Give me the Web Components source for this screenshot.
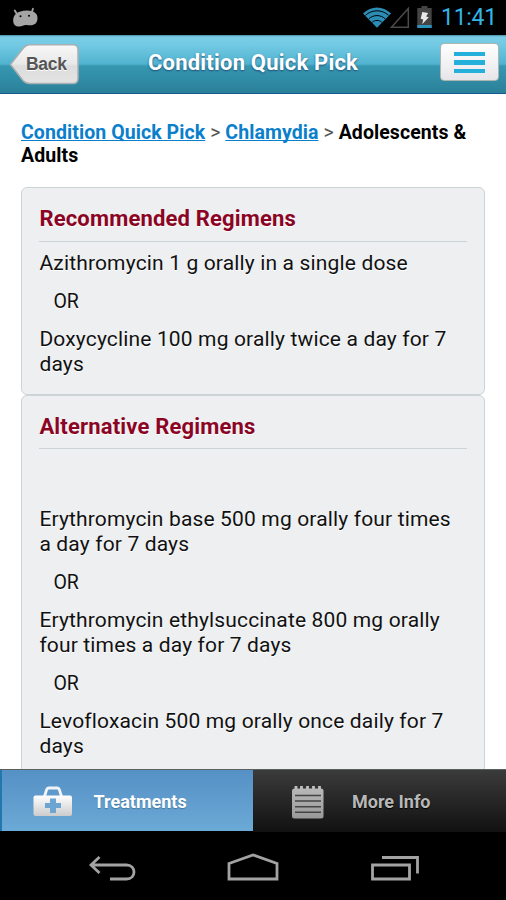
<!DOCTYPE html>
<html lang="en">
  <head>
    <meta charset="UTF-8" />
    <meta name="viewport" content="width=device-width, initial-scale=1.0" />
    <title>Condition Quick Pick</title>
    <style>
      body {
        margin: 0;
        background: #000;
        font-family: Roboto, "Liberation Sans", sans-serif;
      }
    </style>
  </head>
  <body>
    <phone-screen>
      <status-bar slot="top" time="11:41"></status-bar>
      <title-bar slot="top" back="Back">Condition Quick Pick</title-bar>

      <crumb-trail>
        <crumb-link>Condition Quick Pick</crumb-link>
        &gt;
        <crumb-link>Chlamydia</crumb-link>
        &gt;
        <b>Adolescents &amp;<br />Adults</b>
      </crumb-trail>

      <regimen-card heading="Recommended Regimens">
        <regimen-item>Azithromycin 1 g orally in a single dose</regimen-item>
        <regimen-item or>OR</regimen-item>
        <regimen-item>Doxycycline 100 mg orally twice a day for 7<br />days</regimen-item>
      </regimen-card>
      <regimen-card heading="Alternative Regimens" spaced>
        <regimen-item>Erythromycin base 500 mg orally four times<br />a day for 7 days</regimen-item>
        <regimen-item or>OR</regimen-item>
        <regimen-item>Erythromycin ethylsuccinate 800 mg orally<br />four times a day for 7 days</regimen-item>
        <regimen-item or>OR</regimen-item>
        <regimen-item>Levofloxacin 500 mg orally once daily for 7<br />days</regimen-item>
      </regimen-card>

      <tab-bar slot="bottom">
        <tab-item icon="kit" active>Treatments</tab-item>
        <tab-item icon="notes">More Info</tab-item>
      </tab-bar>
      <system-nav slot="bottom"></system-nav>
    </phone-screen>

    <script>
      // Small helper base: puts the static markup in an open shadow root
      class BaseElement extends HTMLElement {
        constructor() {
          super();
          this.attachShadow({ mode: "open" });
        }

        connectedCallback() {
          this.shadowRoot.innerHTML = this.render();
        }
      }

      class PhoneScreen extends BaseElement {
        render() {
          return `
            <style>
              :host {
                display: flex;
                flex-direction: column;
                width: 506px;
                height: 900px;
                overflow: hidden;
              }
              main {
                flex: 1;
                min-height: 0;
                overflow: hidden;
                box-sizing: border-box;
                padding: 28px 21px 0;
                background: #fff;
              }
            </style>
            <slot name="top"></slot>
            <main><slot></slot></main>
            <slot name="bottom"></slot>
          `;
        }
      }
      customElements.define("phone-screen", PhoneScreen);

      class StatusBar extends BaseElement {
        render() {
          return `
            <style>
              :host {
                display: flex;
                justify-content: space-between;
                height: 35px;
                background: #000;
              }
              .right { display: flex; }
              time {
                width: 65px;
                font-size: 23px;
                font-weight: 400;
                line-height: 36px;
                letter-spacing: -0.3px;
                color: #33b5e5;
                white-space: nowrap;
              }
            </style>
            <svg width="50" height="35" viewBox="0 0 50 35">
              <path d="M14.800 10.500l2.400 4M33 8.800l-1.600 4.500" stroke="#a5a5a5" stroke-width="1.800" stroke-linecap="round" />
              <path d="M13.200 20.500c0-4.500 2.300-7.500 6.500-8.800 4-1.400 9-1.700 12.700-.4 3.400 1.200 5.400 3.900 5.100 7.400-.3 4.400-3 6.500-7 6.500-1.500 0-3.500-.4-5-.2-2 .3-3 1.500-6.400 1.500-3.600 0-5.900-2-5.900-6z" fill="#a5a5a5" />
              <circle cx="20.500" cy="16.300" r="1" /><circle cx="29" cy="15.800" r="1" />
            </svg>
            <div class="right">
              <svg width="80" height="35" viewBox="361 0 80 35">
                <path d="M377 27.800L363 13.500C371 5.500 383 5.500 391 13.500z" fill="#2b8db5" />
                <g fill="none" stroke="#000" stroke-width="1">
                  <path d="M365.500 15.300c6.500-6 16.500-6 23 0M368.800 18.800c4.600-4.300 11.800-4.300 16.400 0M372.200 22.300c2.700-2.500 6.900-2.500 9.600 0" />
                </g>
                <path d="M391.500 27.300L408.300 8.500v18.800z" fill="none" stroke="#4a4a4a" stroke-width="1.500" />
                <path d="M417.300 8h4.200V6h6v2h4.200v20h-14.400z" fill="#444" />
                <path d="M417.300 25h14.400v3h-14.400z" fill="#2b94bd" />
                <path d="M422.300 12l5.800 1-2 3.500 2.700.8-6.600 6.900 1-4.700-2.500-.8z" fill="#e8e8e8" />
              </svg>
              <time>${this.getAttribute("time")}</time>
            </div>
          `;
        }
      }
      customElements.define("status-bar", StatusBar);

      class TitleBar extends BaseElement {
        render() {
          return `
            <style>
              :host {
                display: flex;
                align-items: flex-start;
                box-sizing: border-box;
                height: 59px;
                padding: 8px 7px 0 9px;
                border-bottom: 1px solid #145a8e;
                background: linear-gradient(#478fa5 0, #7bcde6 2px, #72c9e3 10px, #50b3cf 29px, #3797b1 31px, #2a8099 58px);
              }
              .back {
                display: grid;
                width: 71px;
              }
              .back > * { grid-area: 1 / 1; }
              .back span {
                padding-left: 17px;
                font: bold 17.500px/43px "Liberation Sans", sans-serif;
                letter-spacing: -0.3px;
                color: #555;
                text-shadow: 0 1px #fff;
              }
              h1 {
                margin: 0 auto 0 68px;
                font-size: 22px;
                font-weight: 700;
                line-height: 40px;
                letter-spacing: 0.2px;
                color: #fff;
                text-shadow: 0 1px 2px #1c4c78;
                white-space: nowrap;
              }
              .menu {
                display: flex;
                flex-direction: column;
                justify-content: center;
                align-items: center;
                gap: 4.400px;
                box-sizing: border-box;
                width: 59px;
                height: 38px;
                padding-top: 1px;
                border: 1.500px solid #adb5b0;
                border-radius: 4px;
                background: linear-gradient(#fff, #e6e6ea);
              }
              .menu i {
                width: 31px;
                height: 4.200px;
                background: #25b0dc;
              }
            </style>
            <div class="back">
              <svg width="71" height="42" viewBox="9 43 71 42">
                <defs>
                  <linearGradient id="g" x2="0" y2="1">
                    <stop stop-color="#f8f8f8" /><stop offset=".5" stop-color="#e8e8e8" />
                    <stop offset=".55" stop-color="#dcdcdc" /><stop offset="1" stop-color="#e4e4e4" />
                  </linearGradient>
                </defs>
                <path d="M10.500 64.500L23 48.500Q26 44.700 30 44.700H73Q78 44.700 78 49.500V78.500Q78 83.500 73 83.500H30Q26 83.500 23 80.500z" fill="url(#g)" stroke="#a9afb2" stroke-width="1.500" />
              </svg>
              <span>${this.getAttribute("back")}</span>
            </div>
            <h1><slot></slot></h1>
            <div class="menu"><i></i><i></i><i></i></div>
          `;
        }
      }
      customElements.define("title-bar", TitleBar);

      class CrumbTrail extends BaseElement {
        render() {
          return `
            <style>
              :host {
                display: block;
                height: 65px;
                font-size: 19.500px;
                line-height: 22.500px;
                letter-spacing: 0.08px;
                color: #555;
                white-space: nowrap;
              }
              ::slotted(b) {
                font-weight: 700;
                color: #000;
              }
            </style>
            <slot></slot>
          `;
        }
      }
      customElements.define("crumb-trail", CrumbTrail);

      class CrumbLink extends BaseElement {
        render() {
          return `
            <style>
              :host { display: inline; }
              a {
                font-weight: 700;
                color: #0a80cc;
                text-decoration: underline;
                text-decoration-thickness: 1px;
                text-decoration-skip-ink: none;
              }
            </style>
            <a href="#"><slot></slot></a>
          `;
        }
      }
      customElements.define("crumb-link", CrumbLink);

      class RegimenCard extends BaseElement {
        render() {
          return `
            <style>
              :host {
                display: block;
                box-sizing: border-box;
                width: 464px;
                padding: 17px 17px 4.100px 17.400px;
                border: 1.500px solid #ccd4d6;
                border-radius: 6px;
                background: #edeff1;
                text-shadow: 0 1px #fff;
              }
              h2 {
                margin: 0 0 9.500px;
                height: 35.500px;
                border-bottom: 1.500px solid #ccd3d6;
                font-size: 22px;
                font-weight: 700;
                line-height: 28px;
                letter-spacing: 0.17px;
                color: #8b0424;
                white-space: nowrap;
              }
              :host([spaced]) h2 { margin-bottom: 57.500px; }
            </style>
            <h2>${this.getAttribute("heading")}</h2>
            <slot></slot>
          `;
        }
      }
      customElements.define("regimen-card", RegimenCard);

      class RegimenItem extends BaseElement {
        render() {
          return `
            <style>
              :host {
                display: block;
                margin-bottom: 12.700px;
                font-size: 21px;
                font-weight: 400;
                line-height: 25.200px;
                letter-spacing: 0.15px;
                color: #111;
                white-space: nowrap;
              }
              :host([or]) {
                padding-left: 14px;
                font-size: 19.500px;
                letter-spacing: 0;
              }
            </style>
            <slot></slot>
          `;
        }
      }
      customElements.define("regimen-item", RegimenItem);

      class TabBar extends BaseElement {
        render() {
          return `
            <style>
              :host {
                display: flex;
                box-sizing: border-box;
                height: 63px;
                border-top: 1px solid #59605f;
                background: #000;
              }
            </style>
            <slot></slot>
          `;
        }
      }
      customElements.define("tab-bar", TabBar);

      const tabIcons = {
        kit: `
          <svg width="40" height="32" viewBox="33 786 40 32">
            <defs><linearGradient id="k" x2="0" y2="1"><stop stop-color="#fff" /><stop offset="1" stop-color="#ccc" /></linearGradient></defs>
            <path d="M44.500 796.500l2-6.500q.7-2 2.500-2h8q1.800 0 2.500 2l2 6.500" fill="none" stroke="#f1f4f7" stroke-width="2.800" />
            <rect x="33.500" y="795.500" width="38.500" height="20.500" rx="2" fill="url(#k)" />
            <path d="M50 798.500h6v4.500h5v5h-5v5h-6v-5h-5v-5h5z" fill="#6ca5d1" />
          </svg>`,
        notes: `
          <svg width="40" height="34" viewBox="291 785 40 34">
            <defs><linearGradient id="n" x2="0" y2="1"><stop stop-color="#b8b8b8" /><stop offset="1" stop-color="#999" /></linearGradient></defs>
            <path d="M296 786v5M301.500 786v5M307.500 786v5M313.500 786v5M319.500 786v5" stroke="#c0c0c0" stroke-width="2.800" />
            <rect x="292" y="788.500" width="31.500" height="30" rx="2.500" fill="url(#n)" />
            <path d="M295 795.500h26M295 801h26M295 806.700h26M295 812.300h26" stroke="#444" stroke-width="1.500" />
          </svg>`,
      };

      class TabItem extends BaseElement {
        render() {
          return `
            <style>
              :host {
                display: flex;
                align-items: center;
                gap: 21px;
                box-sizing: border-box;
                width: 253px;
                padding: 2px 0 1px 38px;
                font-size: 18px;
                font-weight: 700;
                color: #b8b8b8;
                text-shadow: 0 1px 1px #000;
                background: linear-gradient(#3b3b3b, #111);
                white-space: nowrap;
              }
              :host([active]) {
                height: 61px;
                padding: 2px 0 0 31px;
                gap: 20.500px;
                border-left: 2px solid #2277ad;
                color: #fff;
                text-shadow: 0 1px 1px #47789d;
                background: linear-gradient(#5591c5, #6ba9d6);
              }
            </style>
            ${tabIcons[this.getAttribute("icon")]}
            <span><slot></slot></span>
          `;
        }
      }
      customElements.define("tab-item", TabItem);

      class SystemNav extends BaseElement {
        render() {
          return `
            <style>
              :host {
                display: block;
                height: 68px;
                background: #000;
              }
              svg { display: block; }
            </style>
            <svg width="506" height="68" viewBox="0 832 506 68" fill="none" stroke="#a3a3a3" stroke-width="2.800">
              <path d="M99.500 857l-8.500 8 8.500 8M91 865h35.500c10 0 10 14 0 14H110" />
              <path d="M229 863.500l24-8.500 24 8.500V879h-48z" />
              <path d="M372.500 865h37v14h-37zM382 857.500h35.500v16" />
            </svg>
          `;
        }
      }
      customElements.define("system-nav", SystemNav);
    </script>
  </body>
</html>
